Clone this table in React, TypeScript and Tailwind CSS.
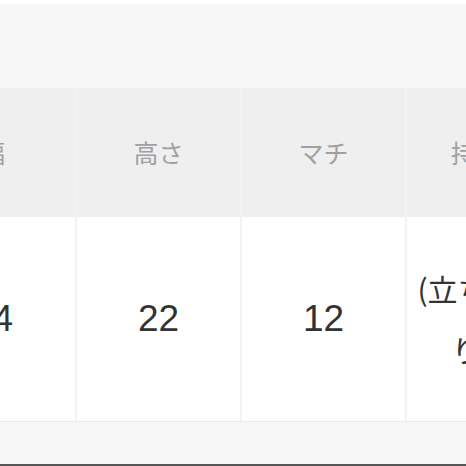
const font = "font-['Noto_Sans_CJK_JP','Noto_Sans',sans-serif]";

const headers = ["幅", "高さ", "マチ", "持ち手"];

export default function App() {
    return (
        <div className={`w-[466px] h-[466px] overflow-hidden bg-white ${font}`}>
            <div className="mt-[4px] bg-[#f7f7f7] flex flex-col">
                {/* spacer band above the table */}
                <div className="h-[84px]" />

                {/* size table */}
                <div className="ml-[-90px] flex flex-col">
                    {/* header row */}
                    <div className="flex h-[129px] bg-[#efefef]">
                        {headers.map((h, i) => (
                            <div
                                key={h}
                                className={`w-[165px] shrink-0 flex items-center justify-center text-[25px] text-[#a0a0a0] ${i > 0 ? "border-l-2 border-[#f3f3f3]" : ""}`}
                            >
                                {h}
                            </div>
                        ))}
                    </div>

                    {/* body row */}
                    <div className="flex h-[205px] bg-white border-b border-[#ebebeb]">
                        {["34", "22", "12"].map((v, i) => (
                            <div
                                key={v}
                                className={`w-[165px] shrink-0 flex items-center justify-center font-['Liberation_Sans',sans-serif] text-[37px] text-[#333333] ${i > 0 ? "border-l-2 border-[#f3f3f3]" : ""}`}
                            >
                                {v}
                            </div>
                        ))}
                        <div className="w-[165px] shrink-0 border-l-2 border-[#f3f3f3] flex flex-col items-center justify-center text-center text-[30px] leading-[61px] text-[#333333]">
                            <span className="block pr-[12px] whitespace-nowrap">(立ち上が</span>
                            <span className="block whitespace-nowrap">り)10</span>
                        </div>
                    </div>
                </div>

                {/* band below the table */}
                <div className="h-[42px]" />
            </div>
            <div className="h-[2px] bg-[#555555]" />
        </div>
    );
}
